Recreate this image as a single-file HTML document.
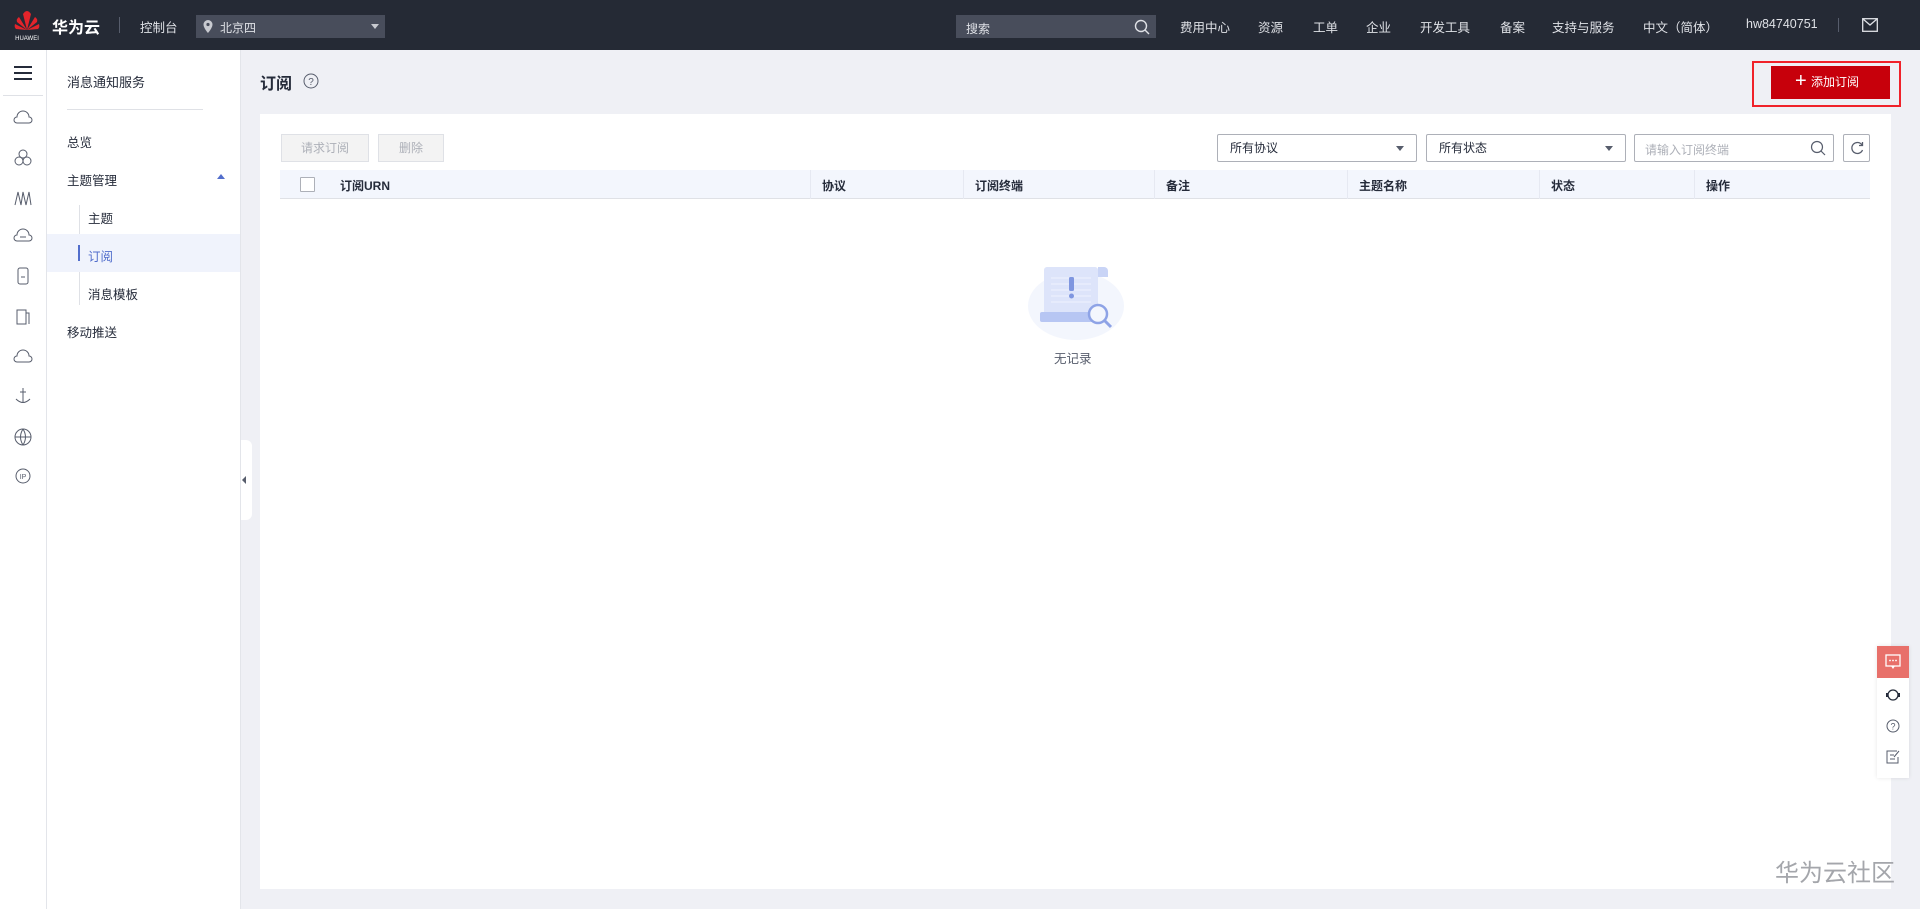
<!DOCTYPE html>
<html><head><meta charset="utf-8"><style>
*{margin:0;padding:0;box-sizing:border-box}
body{width:1920px;height:909px;overflow:hidden;background:#eff0f5;font-family:"Liberation Sans","Noto Sans CJK SC",sans-serif;font-size:12px;color:#252b3a;position:relative}
.a{position:absolute}
.hd{left:0;top:0;width:1920px;height:50px;background:#252a35}
.hd .t{position:absolute;top:17px;color:#dfe1e6;font-size:12.5px}
.side{left:0;top:50px;width:47px;height:859px;background:#fff;border-right:1px solid #e3e5ea}
.menu{left:47px;top:50px;width:194px;height:859px;background:#fff;border-right:1px solid #e3e5ea}
.menu .i{position:absolute;font-size:12.5px;color:#252b3a}
.card{left:260px;top:114px;width:1631px;height:775px;background:#fff}
.btn{position:absolute;top:134px;height:28px;border:1px solid #dfe1e6;background:#f3f3f3;color:#adb0b8;font-size:12px;line-height:26px;text-align:center}
.sel{position:absolute;top:134px;height:28px;width:200px;border:1px solid #adb0b8;border-radius:2px;background:#fff;line-height:26px;padding-left:12px;font-size:12px}
.sel:after{content:"";position:absolute;right:12px;top:11px;border:4px solid transparent;border-top:5px solid #575d6c}
.th{left:280px;top:170px;width:1590px;height:29px;background:#f3f6fd;border-bottom:1px solid #dfe1e6}
.th span{position:absolute;top:7px;font-size:12px;font-weight:bold;color:#252b3a}
.th i{position:absolute;top:0;width:1px;height:29px;background:#e6e9f2}
.ic{position:absolute;left:13px;width:20px;height:20px}
</style></head><body>
<div class="a hd">
 <svg class="a" style="left:12px;top:8px" width="30" height="34" viewBox="0 0 30 34">
  <g fill="#e3242b"><path d="M15 22 L11 6 Q13 3 15 3 Z"/><path d="M15 22 L19 6 Q17 3 15 3 Z"/><path d="M15 22 L7 9 Q4 11 5 14 Z"/><path d="M15 22 L23 9 Q26 11 25 14 Z"/><path d="M15 22 L3 16 Q2 19 4 21 Z"/><path d="M15 22 L27 16 Q28 19 26 21 Z"/></g>
  <text x="15" y="32" fill="#fff" font-size="6" text-anchor="middle" font-family="Liberation Sans">HUAWEI</text></svg>
 <span class="t" style="left:52px;top:14px;font-size:16px;font-weight:bold;color:#fff">华为云</span>
 <div class="a" style="left:119px;top:17px;width:1px;height:16px;background:#575d6c"></div>
 <span class="t" style="left:140px">控制台</span>
 <div class="a" style="left:196px;top:15px;width:189px;height:23px;background:#484d5b"><svg class="a" style="left:7px;top:5px" width="10" height="13"><path d="M5 0a4.5 4.5 0 0 0-4.5 4.5C.5 8 5 13 5 13s4.5-5 4.5-8.5A4.5 4.5 0 0 0 5 0z" fill="#c8cad0"/><circle cx="5" cy="4.5" r="1.6" fill="#484d5b"/></svg><span class="a" style="left:24px;top:4px;color:#dfe1e6;font-size:12px">北京四</span><div class="a" style="right:6px;top:9px;border:4px solid transparent;border-top:5px solid #c8cad0"></div></div>
 <div class="a" style="left:956px;top:15px;width:200px;height:23px;background:#484d5b"><span class="a" style="left:10px;top:5px;color:#dfe1e6;font-size:12px">搜索</span><svg class="a" style="right:6px;top:4px" width="16" height="16"><circle cx="7" cy="7" r="5.5" fill="none" stroke="#dfe1e6" stroke-width="1.4"/><path d="M11 11l4 4" stroke="#dfe1e6" stroke-width="1.4"/></svg></div>
 <span class="t" style="left:1180px">费用中心</span><span class="t" style="left:1258px">资源</span><span class="t" style="left:1313px">工单</span><span class="t" style="left:1366px">企业</span><span class="t" style="left:1420px">开发工具</span><span class="t" style="left:1500px">备案</span><span class="t" style="left:1552px">支持与服务</span><span class="t" style="left:1643px">中文（简体）</span><span class="t" style="left:1746px">hw84740751</span>
 <div class="a" style="left:1838px;top:18px;width:1px;height:14px;background:#575d6c"></div>
 <svg class="a" style="left:1862px;top:18px" width="16" height="14"><rect x=".7" y=".7" width="14.6" height="12.6" fill="none" stroke="#dfe1e6" stroke-width="1.3"/><path d="M1 1l7 6 7-6" fill="none" stroke="#dfe1e6" stroke-width="1.3"/></svg>
</div>
<div class="a side">
 <svg class="a" style="left:13px;top:15px" width="20" height="16"><path d="M1 2h18M1 8h18M1 14h18" stroke="#252b3a" stroke-width="2"/></svg>
 <div class="a" style="left:3px;top:45px;width:40px;height:1px;background:#dfe1e6"></div>
 <svg class="ic" style="top:58px" viewBox="0 0 20 20"><path d="M4 15a3 3 0 0 1 0-6 6 6 0 0 1 12 0 3 3 0 0 1 0 6z" fill="none" stroke="#575d6c"/></svg>
 <svg class="ic" style="top:98px" viewBox="0 0 20 20"><circle cx="10" cy="6" r="4" fill="none" stroke="#575d6c"/><circle cx="6" cy="13" r="4" fill="none" stroke="#575d6c"/><circle cx="14" cy="13" r="4" fill="none" stroke="#575d6c"/></svg>
 <svg class="ic" style="top:138px" viewBox="0 0 20 20"><path d="M2 17L5 4l3 13 2-13 3 13 3-13 2 13" fill="none" stroke="#575d6c"/></svg>
 <svg class="ic" style="top:176px" viewBox="0 0 20 20"><path d="M4 15a3 3 0 0 1 0-6 6 6 0 0 1 12 0 3 3 0 0 1 0 6z" fill="none" stroke="#575d6c"/><path d="M7 11h6" stroke="#575d6c"/></svg>
 <svg class="ic" style="top:216px" viewBox="0 0 20 20"><rect x="5" y="2" width="10" height="16" rx="2" fill="none" stroke="#575d6c"/><path d="M8 11h4" stroke="#575d6c"/></svg>
 <svg class="ic" style="top:257px" viewBox="0 0 20 20"><rect x="4" y="3" width="9" height="14" fill="none" stroke="#575d6c"/><path d="M13 6h3v11" fill="none" stroke="#575d6c"/></svg>
 <svg class="ic" style="top:297px" viewBox="0 0 20 20"><path d="M4 15a3 3 0 0 1 0-6 6 6 0 0 1 12 0 3 3 0 0 1 0 6z" fill="none" stroke="#575d6c"/></svg>
 <svg class="ic" style="top:336px" viewBox="0 0 20 20"><path d="M10 2v15M3 13q7 7 14 0M7 6h6" fill="none" stroke="#575d6c"/></svg>
 <svg class="ic" style="top:377px" viewBox="0 0 20 20"><circle cx="10" cy="10" r="8" fill="none" stroke="#575d6c"/><path d="M2 10h16M10 2q-5 8 0 16M10 2q5 8 0 16" fill="none" stroke="#575d6c"/></svg>
 <svg class="ic" style="top:416px" viewBox="0 0 20 20"><circle cx="10" cy="10" r="7" fill="none" stroke="#575d6c"/><text x="10" y="13" font-size="7" text-anchor="middle" fill="#575d6c">IP</text></svg>
</div>
<div class="a menu">
 <span class="i" style="left:20px;top:22px;font-size:13px">消息通知服务</span>
 <div class="a" style="left:20px;top:59px;width:136px;height:1px;background:#dfe1e6"></div>
 <span class="i" style="left:20px;top:82px">总览</span>
 <span class="i" style="left:20px;top:120px">主题管理</span>
 <div class="a" style="left:170px;top:124px;border:4px solid transparent;border-bottom:5px solid #526ecc;border-top:0"></div>
 <div class="a" style="left:32px;top:155px;width:1px;height:100px;background:#dfe1e6"></div>
 <div class="a" style="left:0;top:184px;width:193px;height:38px;background:#f0f3fc"></div>
 <div class="a" style="left:31px;top:195px;width:2px;height:16px;background:#526ecc"></div>
 <span class="i" style="left:41px;top:158px">主题</span>
 <span class="i" style="left:41px;top:196px;color:#526ecc">订阅</span>
 <span class="i" style="left:41px;top:234px">消息模板</span>
 <span class="i" style="left:20px;top:272px">移动推送</span>
</div>
<div class="a" style="left:241px;top:440px;width:11px;height:80px;background:#fff;border-radius:0 6px 6px 0"><div class="a" style="left:1px;top:36px;border:4px solid transparent;border-right:4px solid #575d6c;border-left:0"></div></div>
<span class="a" style="left:260px;top:70px;font-size:16px;font-weight:bold">订阅</span>
<svg class="a" style="left:303px;top:73px" width="16" height="16"><circle cx="8" cy="8" r="7" fill="none" stroke="#575d6c"/><text x="8" y="12" font-size="10" text-anchor="middle" fill="#575d6c">?</text></svg>
<div class="a" style="left:1752px;top:61px;width:149px;height:46px;border:2px solid #f0222a"></div>
<div class="a" style="left:1771px;top:66px;width:119px;height:33px;background:#c7000b;color:#fff;font-size:12px;line-height:33px;padding-left:40px"><span class="a" style="left:24px;top:-1px;font-size:20px;font-weight:300">+</span>添加订阅</div>
<div class="a card"></div>
<div class="btn" style="left:281px;width:88px">请求订阅</div>
<div class="btn" style="left:378px;width:66px">删除</div>
<div class="sel" style="left:1217px">所有协议</div>
<div class="sel" style="left:1426px">所有状态</div>
<div class="a" style="left:1634px;top:134px;width:200px;height:28px;border:1px solid #adb0b8;border-radius:2px;background:#fff"><span class="a" style="left:10px;top:6px;color:#adb0b8">请输入订阅终端</span><svg class="a" style="right:7px;top:5px" width="16" height="16"><circle cx="7" cy="7" r="5.5" fill="none" stroke="#575d6c" stroke-width="1.2"/><path d="M11 11l4 4" stroke="#575d6c" stroke-width="1.2"/></svg></div>
<div class="a" style="left:1843px;top:134px;width:27px;height:28px;border:1px solid #adb0b8;border-radius:2px;background:#fff"><svg class="a" style="left:6px;top:6px" width="14" height="14"><path d="M12 4A5.5 5.5 0 1 0 12.5 9" fill="none" stroke="#575d6c" stroke-width="1.3"/><path d="M12.5 1v3.5H9" fill="none" stroke="#575d6c" stroke-width="1.3"/></svg></div>
<div class="a th">
 <div class="a" style="left:20px;top:7px;width:15px;height:15px;border:1px solid #adb0b8;background:#fff;border-radius:1px"></div>
 <span style="left:60px">订阅URN</span><i style="left:530px"></i>
 <span style="left:542px">协议</span><i style="left:683px"></i>
 <span style="left:695px">订阅终端</span><i style="left:874px"></i>
 <span style="left:886px">备注</span><i style="left:1067px"></i>
 <span style="left:1079px">主题名称</span><i style="left:1259px"></i>
 <span style="left:1271px">状态</span><i style="left:1414px"></i>
 <span style="left:1426px">操作</span>
</div>
<svg class="a" style="left:1026px;top:262px" width="100" height="80" viewBox="0 0 100 80">
 <ellipse cx="50" cy="44" rx="48" ry="34" fill="#f3f6fd"/>
 <rect x="18" y="5" width="54" height="52" rx="3" fill="#dde4fa"/>
 <path d="M72 5h6a4 4 0 0 1 4 4v6h-10z" fill="#c9d4f6"/>
 <g stroke="#eef2fd" stroke-width="1"><path d="M25 16h40M25 22h40M25 28h40M25 34h40M25 40h40"/></g>
 <rect x="43" y="15" width="5" height="14" rx="1.5" fill="#7f96e0"/><circle cx="45.5" cy="34" r="2.5" fill="#7f96e0"/>
 <rect x="14" y="50" width="56" height="10" rx="2" fill="#b7c6f3"/>
 <circle cx="72" cy="52" r="9" fill="#f3f6fd" stroke="#8ea3e6" stroke-width="2.5"/><path d="M78 58l7 7" stroke="#8ea3e6" stroke-width="3"/>
</svg>
<span class="a" style="left:1054px;top:348px;font-size:12.5px;color:#575d6c">无记录</span>
<div class="a" style="left:1877px;top:646px;width:32px;height:132px;background:#fff;box-shadow:0 0 4px rgba(0,0,0,.1)">
 <div class="a" style="left:0;top:0;width:32px;height:32px;background:#e8706a"><svg class="a" style="left:8px;top:8px" width="16" height="16"><rect x="1" y="1" width="14" height="11" fill="none" stroke="#fff" stroke-width="1.3"/><path d="M6 12l2 3 2-3" fill="#fff"/><circle cx="5" cy="6.5" r=".9" fill="#fff"/><circle cx="8" cy="6.5" r=".9" fill="#fff"/><circle cx="11" cy="6.5" r=".9" fill="#fff"/></svg></div>
 <svg class="a" style="left:8px;top:41px" width="16" height="16"><circle cx="8" cy="8" r="5" fill="none" stroke="#252b3a" stroke-width="1.3"/><rect x="1" y="6" width="2.5" height="4" fill="#252b3a"/><rect x="12.5" y="6" width="2.5" height="4" fill="#252b3a"/></svg>
 <svg class="a" style="left:9px;top:73px" width="14" height="14"><circle cx="7" cy="7" r="6" fill="none" stroke="#575d6c"/><text x="7" y="10.5" font-size="9" text-anchor="middle" fill="#575d6c">?</text></svg>
 <svg class="a" style="left:9px;top:104px" width="14" height="14"><path d="M11 1H1v12h11V7" fill="none" stroke="#575d6c"/><path d="M4 5h4M4 9h5M13 1L8 7" fill="none" stroke="#575d6c"/></svg>
</div>
<span class="a" style="left:1775px;top:853px;font-size:24px;color:#a4a6ab">华为云社区</span>
</body></html>
